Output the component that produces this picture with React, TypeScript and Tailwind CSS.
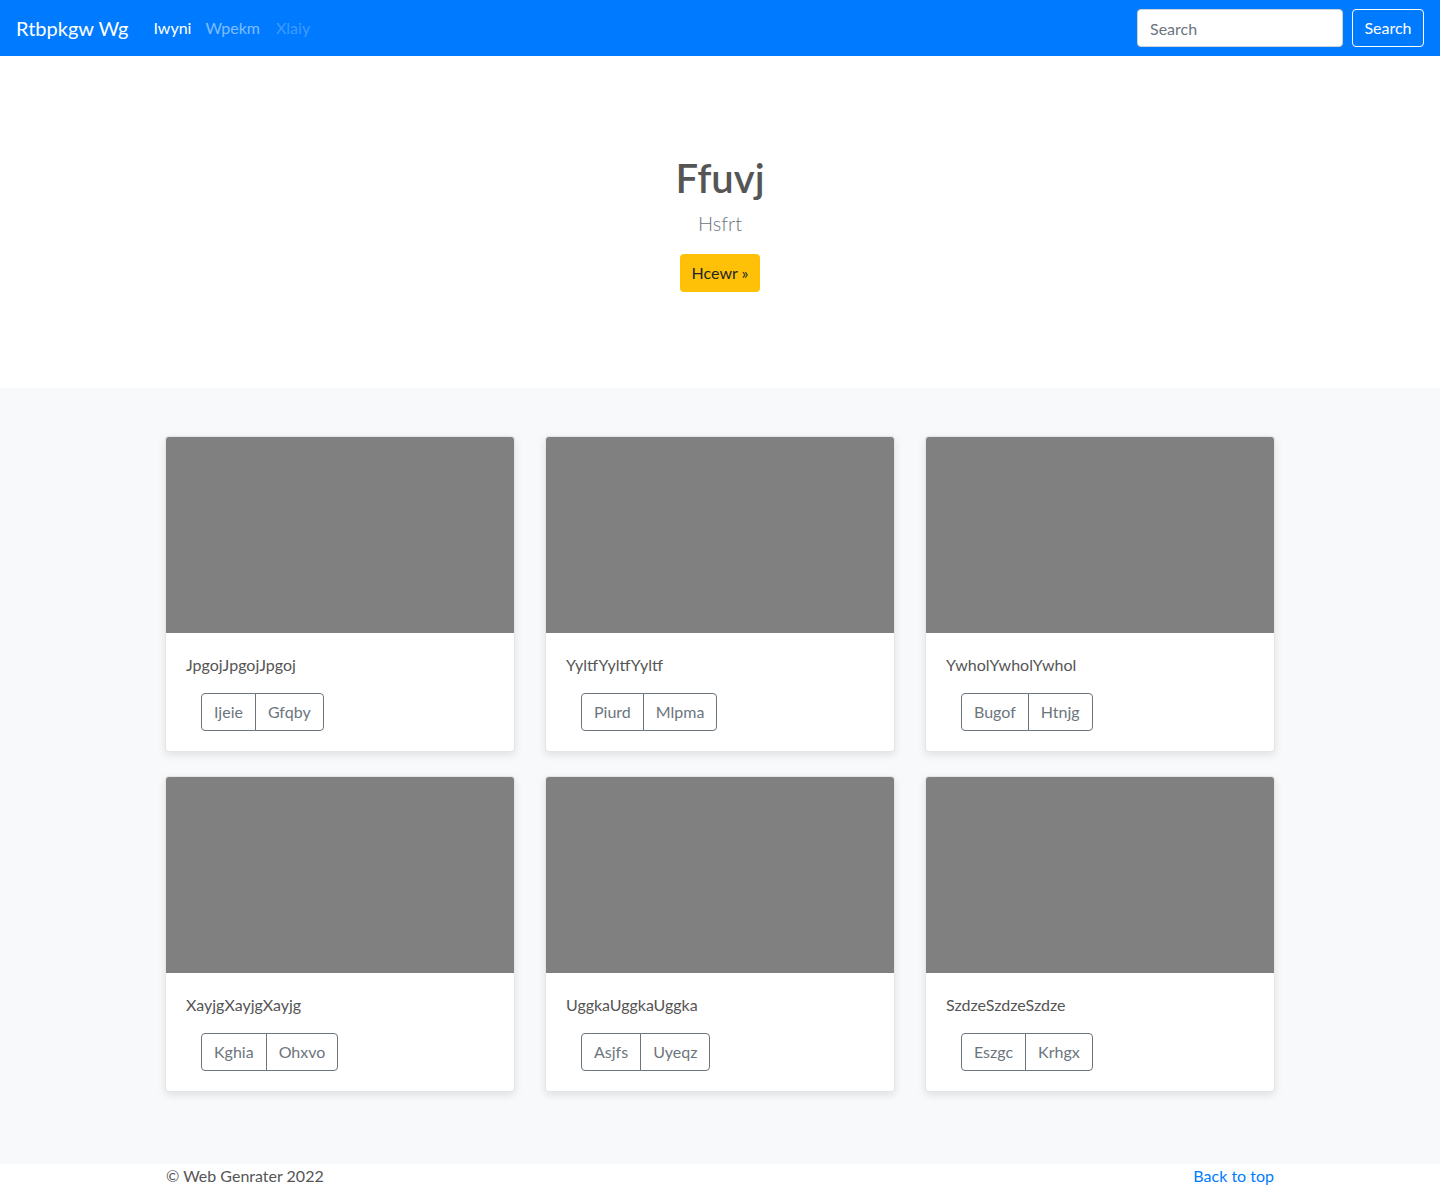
import React from "react";

const cards = [
  { title: "JpgojJpgojJpgoj", a: "Ijeie", b: "Gfqby" },
  { title: "YyltfYyltfYyltf", a: "Piurd", b: "Mlpma" },
  { title: "YwholYwholYwhol", a: "Bugof", b: "Htnjg" },
  { title: "XayjgXayjgXayjg", a: "Kghia", b: "Ohxvo" },
  { title: "UggkaUggkaUggka", a: "Asjfs", b: "Uyeqz" },
  { title: "SzdzeSzdzeSzdze", a: "Eszgc", b: "Krhgx" },
];

function Card({ title, a, b }: { title: string; a: string; b: string }) {
  return (
    <div className="mb-[24px] overflow-hidden rounded-[4px] border border-black/10 bg-white shadow-[0_3px_8px_rgba(0,0,0,0.1)]">
      <div className="h-[196px] bg-[#808080]" />
      <div className="p-[20px]">
        <p className="text-[16px] leading-[24px] text-[#555]">{title}</p>
        <div className="ml-[15px] mt-[16px] inline-flex">
          <button className="h-[38px] rounded-l-[4px] border border-[#6c757d] px-[12px] text-[16px] text-[#6c757d]">
            {a}
          </button>
          <button className="-ml-px h-[38px] rounded-r-[4px] border border-[#6c757d] px-[12px] text-[16px] text-[#6c757d]">
            {b}
          </button>
        </div>
      </div>
    </div>
  );
}

export default function App() {
  return (
    <div className="min-h-[1188px] bg-white font-['Segoe_UI',Lato,sans-serif] text-[#212529]">
      <nav className="flex h-[56px] items-center justify-between bg-[#007bff] px-[16px]">
        <div className="flex items-center">
          <span className="mr-[17px] text-[20px] text-white">Rtbpkgw Wg</span>
          <a className="pl-[8px] pr-[6px] text-[16px] text-white">Iwyni</a>
          <a className="px-[8px] text-[16px] text-white/50">Wpekm</a>
          <a className="px-[8px] text-[16px] text-white/25">Xlaiy</a>
        </div>
        <div className="flex items-center gap-[9px]">
          <input
            placeholder="Search"
            className="h-[38px] w-[206px] rounded-[4px] border border-[#ced4da] bg-white px-[12px] text-[16px] placeholder:text-[#6c757d]"
          />
          <button className="h-[38px] w-[72px] rounded-[4px] border border-white text-[16px] text-white">
            Search
          </button>
        </div>
      </nav>

      <section className="flex flex-col items-center pb-[96px] pt-[98px]">
        <h1 className="text-[40px] font-semibold leading-[48px] text-[#555]">Ffuvj</h1>
        <p className="mt-[6px] text-[20px] font-light leading-[30px] text-[#6c757d]">Hsfrt</p>
        <button className="mt-[16px] h-[38px] rounded-[4px] bg-[#ffc107] px-[12px] text-[16px] text-[#212529]">
          Hcewr »
        </button>
      </section>

      <section className="bg-[#f8f9fa] py-[48px]">
        <div className="mx-auto grid w-[1110px] grid-cols-3 gap-x-[30px]">
          {cards.map((c) => (
            <Card key={c.title} {...c} />
          ))}
        </div>
      </section>

      <footer className="mx-auto flex w-[1108px] justify-between text-[16px] leading-[24px]">
        <p className="text-[#555]">© Web Genrater 2022</p>
        <a className="text-[#007bff]">Back to top</a>
      </footer>
    </div>
  );
}
